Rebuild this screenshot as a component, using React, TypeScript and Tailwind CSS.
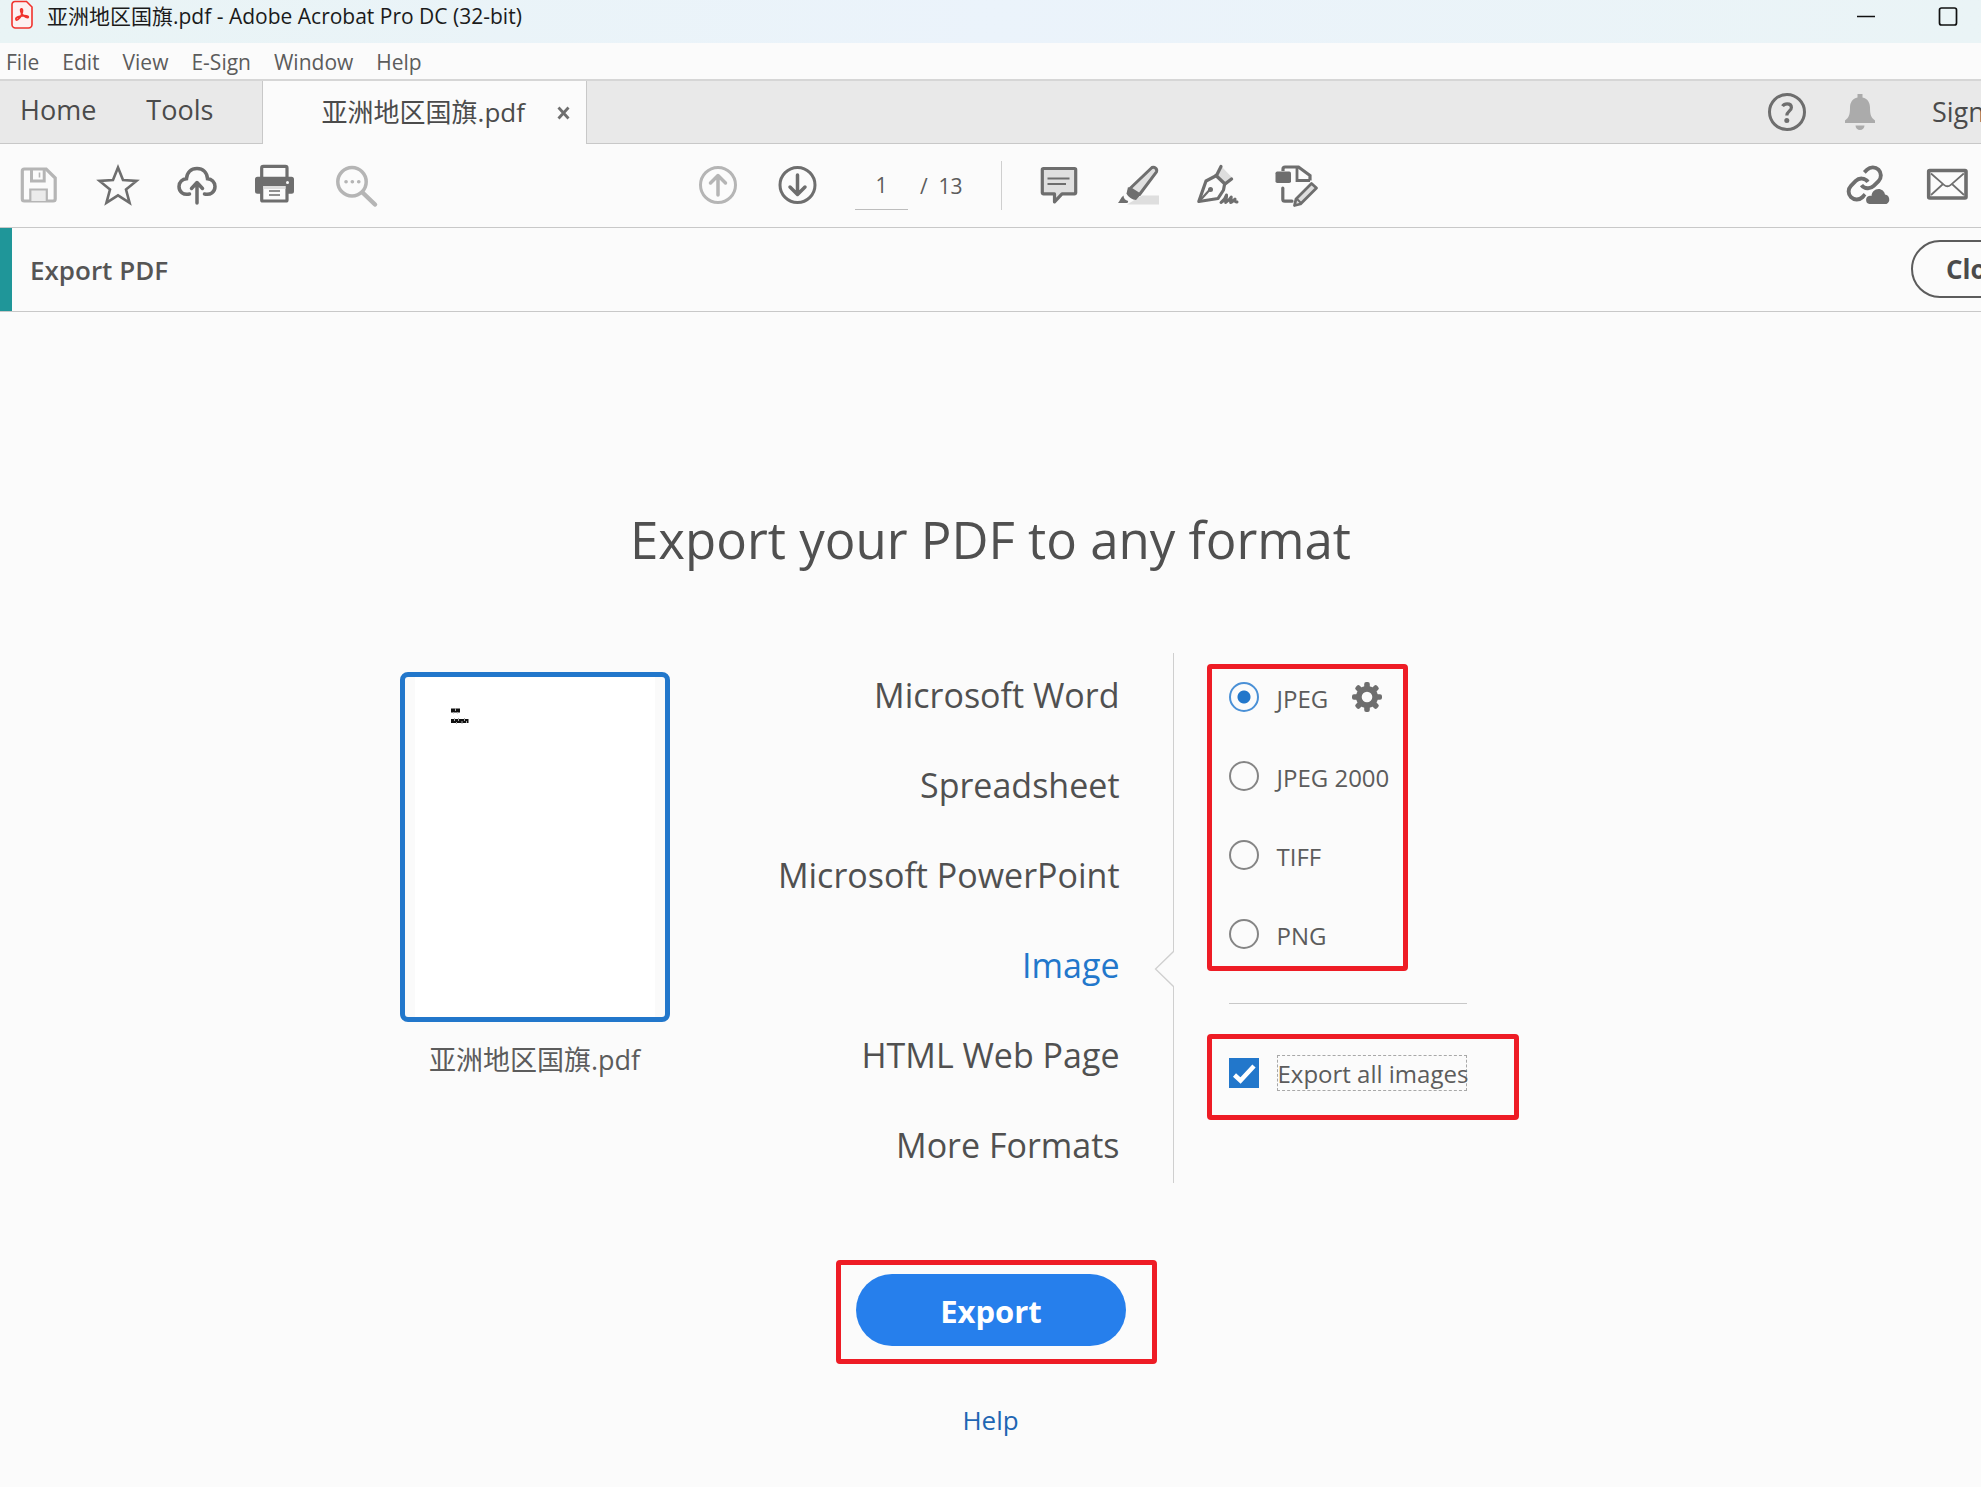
import React, { useState } from 'react';

const FILE_NAME = '亚洲地区国旗.pdf';
const MENUS = ['File', 'Edit', 'View', 'E-Sign', 'Window', 'Help'];
const FORMATS = ['Microsoft Word', 'Spreadsheet', 'Microsoft PowerPoint', 'Image', 'HTML Web Page', 'More Formats'];
const IMAGE_TYPES = ['JPEG', 'JPEG 2000', 'TIFF', 'PNG'];

interface ToolButtonProps {
    label: string;
    disabled?: boolean;
    children: React.ReactNode;
}

const ToolButton: React.FC<ToolButtonProps> = ({ label, disabled, children }) => (
    <button aria-label={label} disabled={disabled} className={disabled ? 'block shrink-0 text-[#b5b5b5]' : 'block shrink-0 text-[#6e6e6e]'}>
        <svg width="44" height="43" viewBox="0 0 44 43" fill="none" stroke="currentColor" className="block overflow-visible">
            {children}
        </svg>
    </button>
);

const AcrobatLogo = () => (
    <svg width="22" height="29" viewBox="0 0 22 29" fill="none" className="block shrink-0">
        <path d="M4 1.500h11.500L21 7v17.500a3.500 3.500 0 0 1-3.500 3.500h-13A3.500 3.500 0 0 1 1 24.500V4.500A3 3 0 0 1 4 1.500z" fill="#fdf1f1" stroke="#f0322c" strokeWidth="1.600" />
        <path d="M5 19.500c-.8-1.800 3-3.300 6-3.700 2.800-.4 6.500-.2 6.300 1.200-.3 1.500-4-.3-5.700-2.200-1.700-2-2.700-5.600-1.200-6 1.600-.3 1.300 3.800-.2 6.700-1.500 2.800-4.300 5.800-5.200 4z" stroke="#f0322c" strokeWidth="1.700" />
    </svg>
);

const TitleBar = () => (
    <header className="flex h-[43px] items-start justify-between bg-linear-to-r from-[#e9f4f5] via-[#ebf3fb] to-[#eaf4f6] pl-[11px] pr-[23px]">
        <div className="flex items-start gap-[14px]">
            <AcrobatLogo />
            <span className="pt-px text-[21px] leading-[30px] text-[#1b1b1b]">{FILE_NAME} - Adobe Acrobat Pro DC (32-bit)</span>
        </div>
        <div className="flex gap-[62px] pt-[6px]">
            <button aria-label="Minimize">
                <svg width="20" height="20" viewBox="0 0 20 20" className="block"><path d="M1 10.500h18" stroke="#111" strokeWidth="1.500" /></svg>
            </button>
            <button aria-label="Maximize">
                <svg width="20" height="20" viewBox="0 0 20 20" className="block"><rect x="1.500" y="2" width="17" height="17" rx="2" fill="none" stroke="#111" strokeWidth="1.700" /></svg>
            </button>
        </div>
    </header>
);

const MenuBar = () => (
    <nav className="flex h-[38px] items-center gap-[23px] border-b-2 border-[#d6d6d6] pl-[6px] pt-[2px] text-[21px] leading-[28px] text-[#5c5c5c]">
        {MENUS.map(menu => (
            <button key={menu}>{menu}</button>
        ))}
    </nav>
);

const TabBar = () => (
    <div className="flex h-[63px] bg-[#e9e9e9] pb-0 text-[27px] leading-[36px] text-[#4b4b4b]">
        <div className="flex w-[263px] shrink-0 items-center gap-[50px] border-b border-r border-[#c8c8c8] pb-1 pl-5">
            <button>Home</button>
            <button>Tools</button>
        </div>
        <div className="flex w-[324px] shrink-0 items-center justify-end gap-8 border-r border-[#c8c8c8] bg-[#fbfbfb] pr-4">
            <span className="pb-[2px] text-[26px]">{FILE_NAME}</span>
            <button aria-label="Close tab">
                <svg width="13" height="14" viewBox="0 0 13 14" className="block"><path d="M1.500 1.500l10 11M11.500 1.500l-10 11" stroke="#6e6e6e" strokeWidth="2.800" /></svg>
            </button>
        </div>
        <div className="flex grow items-center justify-end border-b border-[#c8c8c8]">
            <button aria-label="Help">
                <svg width="40" height="40" viewBox="0 0 40 40" fill="none" stroke="#6e6e6e" className="block">
                    <circle cx="20" cy="20" r="17.500" strokeWidth="3" />
                    <path d="M15.500 14.200c1-1.600 2.600-2.400 4.600-2.400 2.700 0 4.300 1.400 4.300 3.600 0 3.700-4.600 3.900-4.600 8.100" strokeWidth="3.200" />
                    <circle cx="19.800" cy="28.500" r="2.500" fill="#6e6e6e" stroke="none" />
                </svg>
            </button>
            <button aria-label="Notifications" className="ml-[38px]">
                <svg width="30" height="36" viewBox="0 0 30 36" fill="#ababab" className="block">
                    <path d="M12.500 0h5v3.500c5 1 7.500 5 7.500 10 0 7 1 10 5 13v2.500H0v-2.500c4-3 5-6 5-13 0-5 2.500-9 7.500-10zM10.500 31.500h9a4.500 4.500 0 0 1-9 0z" />
                </svg>
            </button>
            <button className="ml-[57px] w-[49px] shrink-0 overflow-hidden whitespace-nowrap text-left">Sign In</button>
        </div>
    </div>
);

const Toolbar = () => (
    <div className="flex h-[84px] items-center border-b border-[#c8c8c8] pl-4 pr-3">
        <div className="flex gap-[35px]">
            <ToolButton label="Save" disabled>
                <path d="M6.300 7a2 2 0 0 1 2-2h21.900l9 9v21a2 2 0 0 1-2 2h-28.900a2 2 0 0 1-2-2z" strokeWidth="3.200" />
                <path d="M15.500 5v12h12.700V5" strokeWidth="3" />
                <path d="M23.500 8.500v5" strokeWidth="1.600" />
                <path d="M14.300 37V25.500h16.500V37" fill="#ebebeb" strokeWidth="2.200" />
            </ToolButton>
            <ToolButton label="Star">
                <path d="M23 3.500l5 12.500 13.500.900-10.500 8.600 3.600 13.300L23 31.300l-11.600 7.500L15 25.500 4.500 16.900 18 16z" strokeWidth="2.600" />
            </ToolButton>
            <ToolButton label="Upload to cloud">
                <path d="M15.500 30C9.500 31.500 5 28 5 22.500c0-4.500 3.500-7.500 7.500-7.800C13 8.500 17 4.500 23 4.500s10 4 10.500 10.200c4 .3 7.500 3.300 7.500 7.800 0 5.500-4.500 9-10.500 7.500" strokeWidth="3.500" strokeLinecap="round" />
                <path d="M23 39V19M17.500 24.500L23 18.500l5.500 6" strokeWidth="3.500" strokeLinecap="round" strokeLinejoin="round" />
            </ToolButton>
            <ToolButton label="Print">
                <path d="M8.700 14V4a1.600 1.600 0 0 1 1.600-1.600h22.100A1.600 1.600 0 0 1 34 4v10" strokeWidth="3.200" />
                <path d="M4.500 12.700h34a2.500 2.500 0 0 1 2.500 2.500v12a2.500 2.500 0 0 1-2.500 2.500h-34A2.500 2.500 0 0 1 2 27.200v-12a2.500 2.500 0 0 1 2.500-2.500z" fill="currentColor" stroke="none" />
                <rect x="8.700" y="20.500" width="25.300" height="16.500" rx="1" fill="#fbfbfb" strokeWidth="3.200" />
                <path d="M10.500 23.500h22" stroke="#dedede" strokeWidth="3" />
                <path d="M16 27h11M16 31h11" strokeWidth="1.700" />
                <circle cx="34.500" cy="18.500" r="1.500" fill="#fbfbfb" stroke="none" />
            </ToolButton>
            <ToolButton label="Find" disabled>
                <circle cx="20" cy="17.700" r="14.200" strokeWidth="3.500" />
                <path d="M30.500 28.500l12.500 12" strokeWidth="4.500" strokeLinecap="round" />
                <path d="M14 17.700h.1M20.300 17.700h.1M26.700 17.700h.1" strokeWidth="3.600" strokeLinecap="round" />
            </ToolButton>
        </div>

        <div className="ml-[320px] flex items-center">
            <ToolButton label="Previous page" disabled>
                <circle cx="22" cy="21" r="17.500" strokeWidth="3" />
                <path d="M22 31V12M14.500 19L22 11.500l7.500 7.500" strokeWidth="3.500" strokeLinecap="round" strokeLinejoin="round" />
            </ToolButton>
            <div className="ml-[35px]">
                <ToolButton label="Next page">
                    <circle cx="22.500" cy="21" r="17.500" strokeWidth="3" />
                    <path d="M22.500 11v19M15 23l7.500 7.500L30 23" strokeWidth="3.500" strokeLinecap="round" strokeLinejoin="round" />
                </ToolButton>
            </div>
            <input aria-label="Page number" defaultValue="1" className="ml-9 h-[49px] w-[53px] border-b border-[#bdbdbd] text-center text-[21px] text-[#5c5c5c] outline-none" />
            <span className="ml-3 w-[81px] whitespace-pre text-[21px] leading-[28px] text-[#5c5c5c]">/  13</span>
            <div className="h-[49px] w-px bg-[#cfcfcf]" />
        </div>

        <div className="ml-[35px] flex gap-[35px]">
            <ToolButton label="Comment">
                <path d="M6.500 4.500h31a1.200 1.200 0 0 1 1.200 1.200v23a1.200 1.200 0 0 1-1.200 1.200H25l-7.500 8v-8h-11a1.200 1.200 0 0 1-1.200-1.200v-23a1.200 1.200 0 0 1 1.200-1.200z" fill="#e0e0e0" strokeWidth="3.200" strokeLinejoin="round" />
                <path d="M10.500 14.500h22M10.500 20h18.500" strokeWidth="1.900" />
            </ToolButton>
            <ToolButton label="Highlight">
                <path d="M26 31.500h17v9H11z" fill="#dedede" stroke="none" />
                <path d="M36 3.500c2.500-1 5.500 1.300 4.500 4.300L23.500 30.500l-9.500-6z" fill="#e0e0e0" strokeWidth="3" strokeLinejoin="round" />
                <path d="M12 23l12 8.500-4 4.500c-3.500 0-8-3-9.500-6.500z" fill="currentColor" stroke="none" />
                <path d="M7.500 31.500c0 3 2 5 4.700 5.500L11.500 39H2c2-2 2.500-5.500 5.500-7.500z" fill="currentColor" stroke="none" />
            </ToolButton>
            <ToolButton label="Sign">
                <path d="M27 3l10.500 11-7 5-9-8.500z" fill="#dedede" stroke="none" />
                <path d="M26 2.500L21.500 11.500 11 17 3.800 37.500 23 34.500l5.500-8.500 1.200-6.500" strokeWidth="3.200" strokeLinejoin="round" strokeLinecap="round" />
                <path d="M21 11.500l9 8.500 6.500-5" strokeWidth="3.400" strokeLinecap="round" strokeLinejoin="round" />
                <path d="M4.500 37l10-11" strokeWidth="2.200" />
                <circle cx="15.500" cy="25.500" r="2.500" fill="currentColor" stroke="none" />
                <path d="M26 38.500c3-2 4.500-4 5.500-7.500.3 2.500-.8 5-.8 7.500 2-1 3.800-3 5.500-5.500 0 2-.7 3.500-.5 5.500 2-.5 2.800-2 4.300-3.500-.3 2 0 3.300 2 3" strokeWidth="3" strokeLinecap="round" strokeLinejoin="round" />
            </ToolButton>
            <ToolButton label="Edit document">
                <path d="M9 7V5a2 2 0 0 1 2-2h13.500L36 11.500v5" strokeWidth="3.200" />
                <path d="M23 3v13.500h13" strokeWidth="2.800" />
                <rect x="1.500" y="7.500" width="15.500" height="11.500" rx="1.800" fill="currentColor" stroke="none" />
                <path d="M8.800 24v11.200a2 2 0 0 0 2 2H18" strokeWidth="3.200" strokeLinecap="round" />
                <path d="M37.500 19.500l5 4.500-16 16-6 1.500 1.500-6.500z" fill="#dedede" strokeWidth="2.800" strokeLinejoin="round" />
                <path d="M22.500 34.500l4.500 4.500" strokeWidth="2" />
            </ToolButton>
        </div>

        <div className="ml-auto flex gap-[35px]">
            <ToolButton label="Share link">
                <g transform="translate(-.7 0) scale(1.620)" strokeWidth="2.400">
                    <path d="M10 13a5 5 0 0 0 7.540.540l3-3a5 5 0 0 0-7.070-7.070l-1.720 1.710" />
                    <path d="M14 11a5 5 0 0 0-7.540-.540l-3 3a5 5 0 0 0 7.070 7.070l1.710-1.710" />
                </g>
                <path d="M23.500 40a4.200 4.200 0 0 1 .3-8.300c.6 0 1.200.1 1.700.4.2-4 3.200-7.100 7-7.100 3.300 0 6 2.400 6.500 5.600A5 5 0 0 1 40.500 40z" fill="currentColor" stroke="#fbfbfb" strokeWidth="3" paintOrder="stroke" />
            </ToolButton>
            <ToolButton label="Email">
                <rect x="3.700" y="6.500" width="37.300" height="27.500" rx="1" strokeWidth="3.600" />
                <path d="M6 9.500l13 11.300c2 1.700 4.800 1.700 6.800 0l13-11.300M6 31l11.500-10.500M39 31L27.500 20.500" strokeWidth="1.700" />
            </ToolButton>
        </div>
    </div>
);

const ExportHeader = () => (
    <div className="flex h-[84px] items-center border-b border-[#c8c8c8]">
        <div className="h-full w-3 shrink-0 bg-[#1f9699]" />
        <h2 className="ml-[18px] text-[26px] font-semibold leading-[36px] text-[#555555]">Export PDF</h2>
        <div className="ml-auto w-[70px] shrink-0 overflow-hidden pb-[2px]">
            <button className="block h-[58px] w-[140px] rounded-full border-2 border-[#5c5c5c] pl-[33px] text-left text-[26px] font-bold leading-[36px] text-[#4b4b4b]">Close</button>
        </div>
    </div>
);

const Gear = () => (
    <svg width="30" height="30" viewBox="0 0 30 30" fill="#6e6e6e" className="block">
        <circle cx="15" cy="15" r="11" />
        {[0, 45, 90, 135].map(angle => (
            <rect key={angle} x="12.200" y="0" width="5.600" height="30" rx="2" transform={`rotate(${angle} 15 15)`} />
        ))}
        <circle cx="15" cy="15" r="5.300" fill="#fbfbfb" />
    </svg>
);

const Thumbnail = () => (
    <figure className="w-[270px] shrink-0 pt-[19px]">
        <div className="h-[350px] rounded-lg border-[5px] border-[#2277cb] bg-[#fafafa] px-[10px]">
            <div className="h-full bg-white pl-[35px] pt-[31px]">
                <svg width="19" height="16" viewBox="0 0 19 16" fill="none" className="block">
                    <path d="M1 2.500h9M1 13h17.500" stroke="#111" strokeWidth="4" />
                    <path d="M3.500 4v1.500M5.500 0v3M7.500 4v1.500M4.500 10v3M8.500 10v3M6.500 14v2M12 13v3M14.500 10v3M16.500 13v2" stroke="#aaa" strokeWidth="1" />
                </svg>
            </div>
        </div>
        <figcaption className="pt-5 text-center text-[27px] leading-[36px] text-[#5c5c5c]">{FILE_NAME}</figcaption>
    </figure>
);

export default function App() {
    const [format, setFormat] = useState('Image');
    const [imageType, setImageType] = useState('JPEG');
    const [exportAll, setExportAll] = useState(true);

    return (
        <div className="min-h-screen overflow-x-hidden bg-[#fbfbfb] font-['Open_Sans','Noto_Sans_CJK_SC',sans-serif]">
            <TitleBar />
            <MenuBar />
            <TabBar />
            <Toolbar />
            <ExportHeader />

            <main className="flex flex-col items-center pb-8 pt-[191px] text-[#505050]">
                <h1 className="text-[51px] leading-[72px]">Export your PDF to any format</h1>

                <section className="mt-[78px] flex h-[530px] w-[1182px]">
                    <Thumbnail />

                    <ul className="flex w-[504px] shrink-0 flex-col items-end gap-[50px] border-r border-[#cfcfcf] pr-[53px] pt-[22px] text-[34px] leading-[40px]">
                        {FORMATS.map(name => (
                            <li key={name} className="relative">
                                <button onClick={() => setFormat(name)} className={name === format ? 'block text-[#2277cb]' : 'block'}>{name}</button>
                                {name === format && (
                                    <svg width="20" height="38" viewBox="0 0 20 38" className="absolute -right-[54px] top-[5px]">
                                        <path d="M20 1L1.500 19 20 37" fill="#fbfbfb" stroke="#cfcfcf" strokeWidth="1.300" />
                                    </svg>
                                )}
                            </li>
                        ))}
                    </ul>

                    <div className="pl-[33px] pt-[11px] text-[24px] leading-[30px] text-[#5c5c5c]">
                        <div className="flex h-[307px] w-[201px] flex-col gap-[49px] rounded-sm border-[5px] border-[#ee1c25] pl-[17px] pt-[13px]">
                            {IMAGE_TYPES.map(type => (
                                <div key={type} className="flex h-[30px] items-center">
                                    <label className="flex items-center gap-[18px] whitespace-nowrap">
                                        <input
                                            type="radio"
                                            name="image-type"
                                            checked={imageType === type}
                                            onChange={() => setImageType(type)}
                                            className="size-[30px] shrink-0 appearance-none rounded-full border-2 border-[#858585] checked:border-[#4a90d6] checked:bg-[radial-gradient(circle,#2277cb_6px,transparent_7px)]"
                                        />
                                        <span className="pt-1">{type}</span>
                                    </label>
                                    {type === imageType && (
                                        <button aria-label="Settings" className="ml-6"><Gear /></button>
                                    )}
                                </div>
                            ))}
                        </div>

                        <hr className="ml-[22px] mt-8 w-[238px] border-[#c8c8c8]" />

                        <div className="mt-[30px] h-[86px] w-[312px] rounded-sm border-[5px] border-[#ee1c25] pl-[17px] pt-4">
                            <label className="flex items-center gap-[18px] whitespace-nowrap">
                                <span className="grid shrink-0">
                                    <input
                                        type="checkbox"
                                        checked={exportAll}
                                        onChange={e => setExportAll(e.target.checked)}
                                        className="col-start-1 row-start-1 size-[30px] appearance-none border border-[#747474] checked:border-[#2277cb] checked:bg-[#2277cb]"
                                    />
                                    {exportAll && (
                                        <svg width="30" height="30" viewBox="0 0 30 30" fill="none" className="pointer-events-none col-start-1 row-start-1">
                                            <path d="M5.500 17l6 5.500L25 8" stroke="#fff" strokeWidth="4.500" />
                                        </svg>
                                    )}
                                </span>
                                <span className="h-9 w-[190px] border border-dashed border-[#a8a8a8] pt-[3px]">Export all images</span>
                            </label>
                        </div>
                    </div>
                </section>

                <div className="ml-3 mt-[77px] h-[104px] w-[321px] rounded-sm border-[5px] border-[#ee1c25] pl-[15px] pt-[9px]">
                    <button className="block h-[72px] w-[270px] rounded-full bg-[#267fec] pt-[2px] text-[31px] font-bold leading-[40px] text-white">Export</button>
                </div>
                <a href="#help" className="mt-[38px] text-[26px] leading-[36px] text-[#1f66b3]">Help</a>
            </main>
        </div>
    );
}
